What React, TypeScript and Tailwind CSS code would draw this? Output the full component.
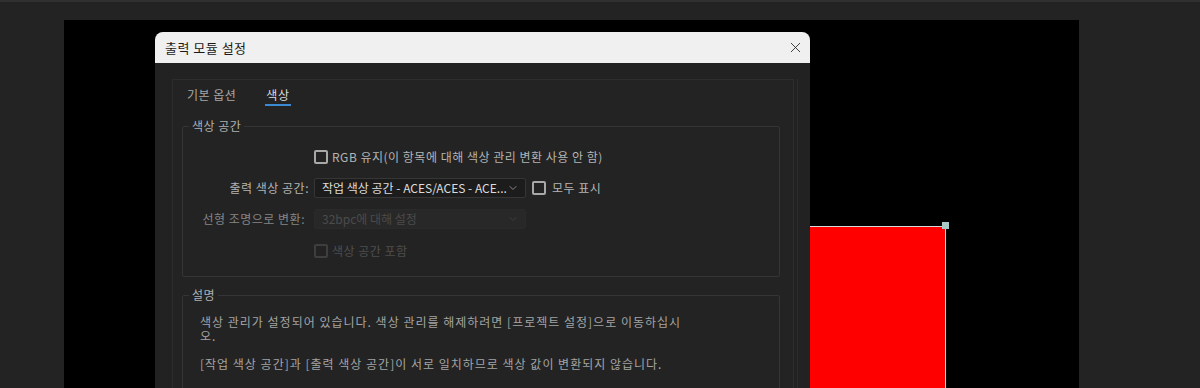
import { ChevronDown, X } from "lucide-react";

const font = { fontFamily: '"Noto Sans CJK KR", "Noto Sans", sans-serif' };

function Box({ disabled }: { disabled?: boolean }) {
  return (
    <span
      className={`h-[14px] w-[14px] shrink-0 rounded-[2px] border-2 ${
        disabled ? "border-[#3e3e3e]" : "border-[#a8a8a8]"
      }`}
    />
  );
}

function Select({ text, disabled }: { text: string; disabled?: boolean }) {
  return (
    <div
      className={`flex h-[20px] w-[212px] items-center justify-between rounded-[2px] border pl-[7px] pr-[6px] ${
        disabled
          ? "border-[#2a2a2a] bg-[#282828] text-[#4b4b4b]"
          : "border-[#363636] bg-[#1c1c1c] text-[#dcdcdc]"
      }`}
    >
      <span className="whitespace-nowrap tracking-[0px]">{text}</span>
      <ChevronDown size={12} strokeWidth={1.5} className={`shrink-0 ${disabled ? "text-[#444]" : "text-[#aaa]"}`} />
    </div>
  );
}

export default function App() {
  return (
    <div
      className="relative h-[388px] w-[1200px] overflow-hidden border-t-2 border-[#303030] bg-[#232323] pl-[64px] pt-[18px] text-[12px]"
      style={font}
    >
      {/* comp canvas */}
      <div className="relative h-[370px] w-[1015px] bg-black">
        <div className="absolute left-[600px] top-[206px] h-[200px] w-[282px] border-r border-t border-[#d9d9d9] bg-[#ff0000]" />
        <div className="absolute left-[878px] top-[202px] h-[7px] w-[7px] bg-[#a9c9c6]" />
      </div>

      {/* dialog */}
      <div className="absolute left-[155px] top-[30px] flex h-[380px] w-[655px] flex-col overflow-hidden rounded-t-[8px] bg-[#222222]">
        <div className="flex h-[31px] shrink-0 items-center justify-between bg-[#f0f0f0] pl-[10px] pr-[6px] text-[13px] tracking-[0.5px] text-[#1a1a1a]">
          <span>출력 모듈 설정</span>
          <X size={17} strokeWidth={1.2} className="text-[#222]" />
        </div>

        <div className="flex flex-1 pl-[17px] pr-[12px] pt-[16px] tracking-[0.5px]">
          <div className="flex-1 border border-[#2d2d2d] bg-[#232323] pl-[9px] pr-[13px]">
            {/* tabs */}
            <div className="flex h-[29px] items-center gap-[30px] pl-[5px] text-[#a8a8a8]">
              <span>기본 옵션</span>
              <span className="relative text-[#dcdcdc]">
                색상
                <span className="absolute -left-[1px] -right-[2px] top-[18px] h-[2px] bg-[#3c8ad3]" />
              </span>
            </div>

            <fieldset className="mt-[10px] h-[158px] rounded-[2px] border border-[#353535]">
              <legend className="ml-[6px] px-[3px] leading-[14px] text-[#b0b0b0]">색상 공간</legend>
              <div className="grid grid-cols-[126px_1fr] items-center gap-x-[5px] pt-[9px] text-[#b4b4b4]">
                <span />
                <div className="flex h-[30px] items-center gap-[4px]">
                  <Box />
                  <span>RGB 유지(이 항목에 대해 색상 관리 변환 사용 안 함)</span>
                </div>
                <span className="text-right">출력 색상 공간:</span>
                <div className="flex h-[31px] items-center gap-[6px]">
                  <Select text="작업 색상 공간 - ACES/ACES - ACE..." />
                  <Box />
                  <span>모두 표시</span>
                </div>
                <span className="pr-[4px] text-right text-[#858585]">선형 조명으로 변환:</span>
                <div className="flex h-[32px] items-center">
                  <Select text="32bpc에 대해 설정" disabled />
                </div>
                <span />
                <div className="flex h-[32px] items-center gap-[4px] text-[#4e4e4e]">
                  <Box disabled />
                  <span>색상 공간 포함</span>
                </div>
              </div>
            </fieldset>

            <fieldset className="mt-[11px] h-[120px] rounded-[2px] border border-[#353535] pl-[17px]">
              <legend className="ml-[-11px] px-[3px] leading-[14px] text-[#b0b0b0]">설명</legend>
              <div className="pt-[13px] leading-[14px] tracking-[1px] text-[#a4a4a4]">
                <p>
                  색상 관리가 설정되어 있습니다. 색상 관리를 해제하려면 [프로젝트 설정]으로 이동하십시
                  <br />
                  오.
                </p>
                <p className="mt-[14px]">[작업 색상 공간]과 [출력 색상 공간]이 서로 일치하므로 색상 값이 변환되지 않습니다.</p>
              </div>
            </fieldset>
          </div>
          <div className="ml-[3px] w-[1px] bg-[#2d2d2d]" />
        </div>
      </div>
    </div>
  );
}
